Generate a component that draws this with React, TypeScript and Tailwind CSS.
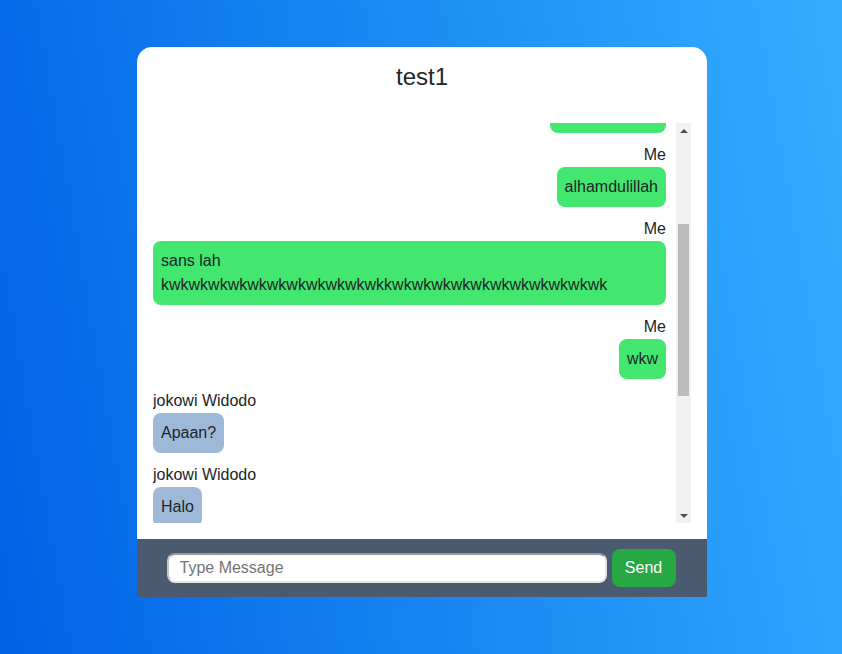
import React, { useLayoutEffect, useRef } from "react";

type Msg = { me: boolean; name: string; text: string };

const messages: Msg[] = [
  { me: true, name: "Me", text: "halo juga" },
  { me: false, name: "jokowi Widodo", text: "gimana kabar?" },
  { me: true, name: "Me", text: "Alhamdulillah!" },
  { me: true, name: "Me", text: "alhamdulillah" },
  { me: true, name: "Me", text: "sans lah kwkwkwkwkwkwkwkwkwkwkwkkwkwkwkwkwkwkwkwkwkwkwk" },
  { me: true, name: "Me", text: "wkw" },
  { me: false, name: "jokowi Widodo", text: "Apaan?" },
  { me: false, name: "jokowi Widodo", text: "Halo" },
  { me: false, name: "jokowi Widodo", text: "P" },
  { me: false, name: "jokowi Widodo", text: "Test" },
  { me: false, name: "jokowi Widodo", text: "Hai apa kabar pak, semoga sehat selalu ya dan sukses terus untuk semuanya" },
];

function Scrollbar() {
  return (
    <div className="w-[15px] h-[400px] bg-[#f1f1f1] flex flex-col items-center shrink-0">
      <div className="h-[15px] w-full flex items-center justify-center">
        <div className="w-0 h-0 border-x-[4px] border-x-transparent border-b-[4px] border-b-[#505050]" />
      </div>
      <div className="h-[86px]" />
      <div className="h-[172px] w-[11px] bg-[#bcbcbc]" />
      <div className="flex-1" />
      <div className="h-[15px] w-full flex items-center justify-center">
        <div className="w-0 h-0 border-x-[4px] border-x-transparent border-t-[4px] border-t-[#505050]" />
      </div>
    </div>
  );
}

export default function App() {
  const ref = useRef<HTMLDivElement>(null);
  useLayoutEffect(() => {
    if (ref.current) ref.current.scrollTop = 202;
  }, []);
  return (
    <div
      className="w-[842px] h-[654px] bg-linear-[80deg] from-[#0062E6] to-[#33AEFF] flex justify-center pt-[47px] pl-[2px]"
      style={{ fontFamily: '"Liberation Sans", Arial, sans-serif' }}
    >
      <div className="w-[570px] h-[550px] bg-white rounded-t-[15px] flex flex-col text-[#212529]">
        <h2 className="text-[24px] leading-[29px] pt-[15px] text-center">test1</h2>
        <div className="px-4 mt-[32px] flex">
          <div ref={ref} className="flex-1 h-[400px] overflow-hidden pr-[10px] text-[16px] leading-[24px]">
            {messages.map((m, i) => (
              <div key={i} className={`mb-[10px] flex flex-col ${m.me ? "items-end" : "items-start"}`}>
                <div>{m.name}</div>
                <div className={`p-2 rounded-lg break-words ${m.me ? "bg-[#43e66f]" : "bg-[#9eb8d8]"}`}>
                  {m.text}
                </div>
              </div>
            ))}
          </div>
          <Scrollbar />
        </div>
        <div className="mt-4 h-[58px] bg-[#4a5b70] flex items-center justify-center gap-[5px] pr-[2px]">
          <input
            placeholder="Type Message"
            className="w-[440px] h-[30px] rounded-lg bg-white border-2 border-[#e4e4e4] border-t-[#999999] border-l-[#c8c8c8] px-[11px] text-[16px] text-[#212529] placeholder:text-[#757575] outline-none"
          />
          <button className="w-[64px] h-[38px] rounded-lg bg-[#28a745] text-white text-[16px]">Send</button>
        </div>
      </div>
    </div>
  );
}
